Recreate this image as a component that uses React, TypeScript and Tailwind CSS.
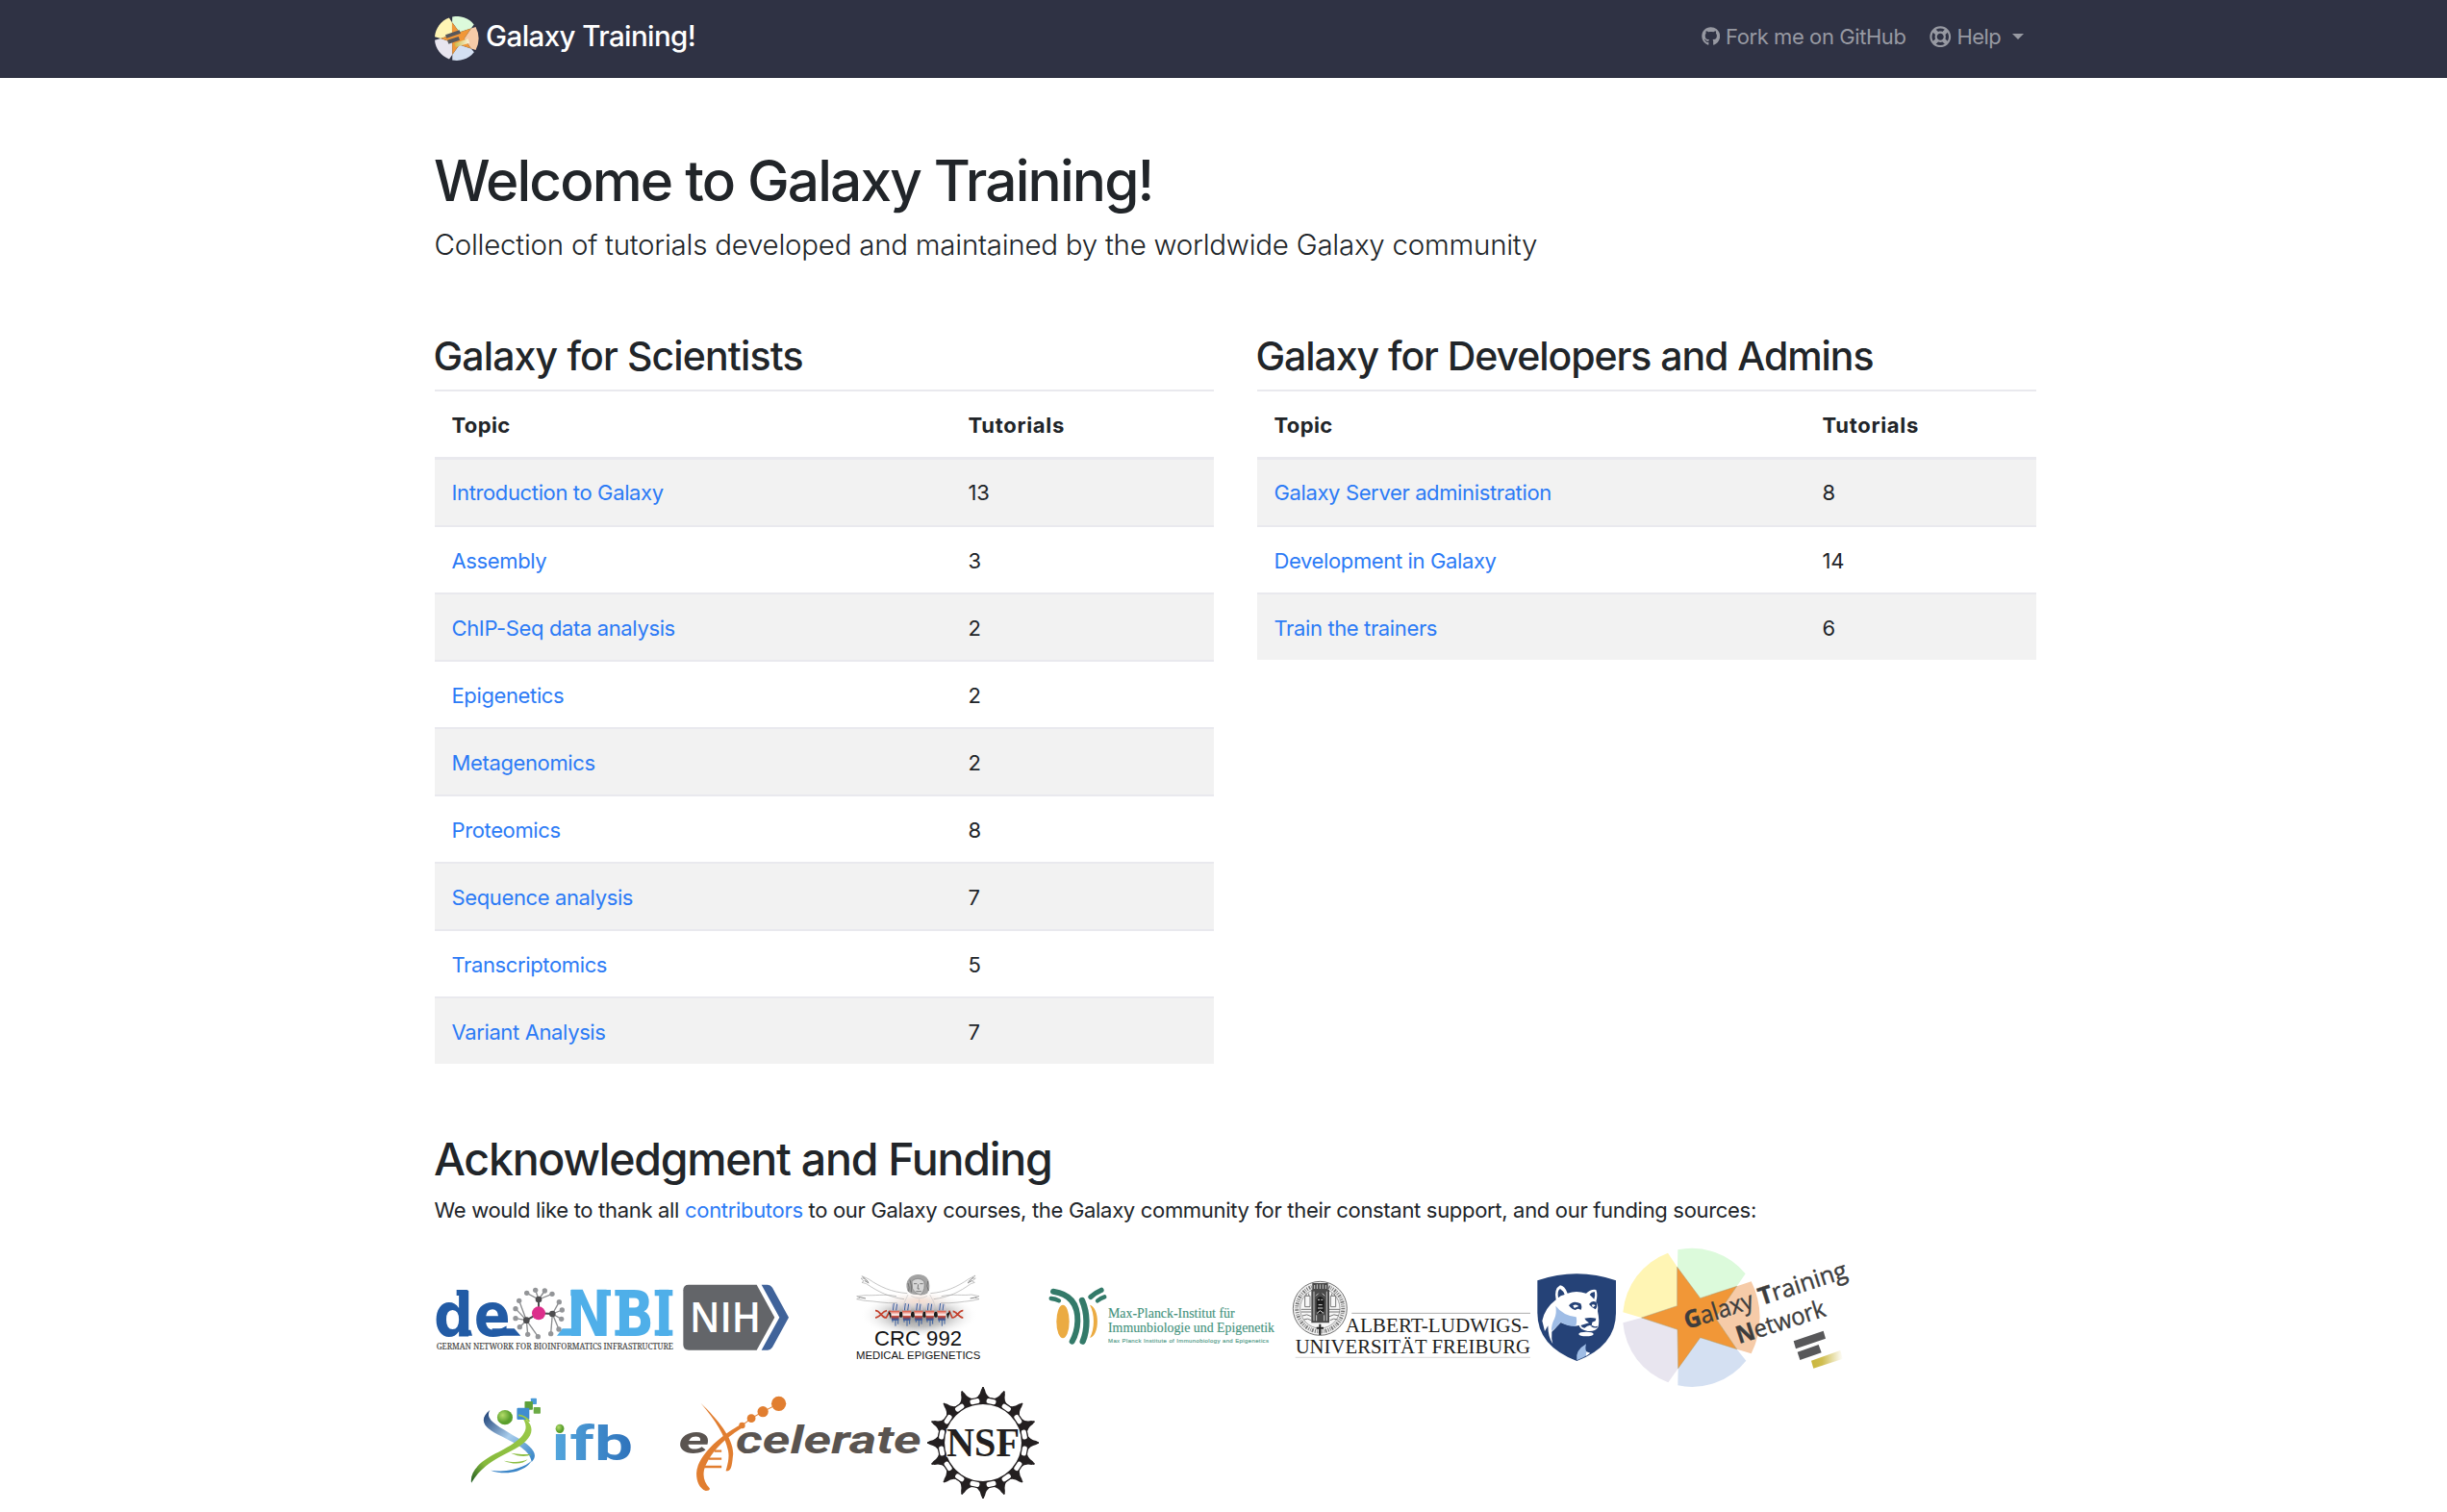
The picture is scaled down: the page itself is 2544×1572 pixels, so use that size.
import React from "react";
import { FaGithub, FaRegLifeRing } from "react-icons/fa";

type Topic = { name: string; count: number };

const scientistTopics: Topic[] = [
  { name: "Introduction to Galaxy", count: 13 },
  { name: "Assembly", count: 3 },
  { name: "ChIP-Seq data analysis", count: 2 },
  { name: "Epigenetics", count: 2 },
  { name: "Metagenomics", count: 2 },
  { name: "Proteomics", count: 8 },
  { name: "Sequence analysis", count: 7 },
  { name: "Transcriptomics", count: 5 },
  { name: "Variant Analysis", count: 7 },
];

const developerTopics: Topic[] = [
  { name: "Galaxy Server administration", count: 8 },
  { name: "Development in Galaxy", count: 14 },
  { name: "Train the trainers", count: 6 },
];

/* The five-wedge wheel with the orange star. */
function StarWheel() {
  return (
    <>
      <path d="M223 28A216 216 0 0 1 434 103L407 142L293 179L222 82Z" fill="#dcfadb" />
      <path d="M192 38A216 216 0 0 0 52 223L110 240L221 203V82Z" fill="#fff5b4" />
      <path d="M52 256A216 216 0 0 0 193 442L224 398L222 277L110 240Z" fill="#e8e5ef" />
      <path d="M223 451A216 216 0 0 0 436 374L407 338L293 302L224 398Z" fill="#d4e0f2" />
      <path d="M452 127A250 250 0 0 1 452 352L407 338L340 240L407 142Z" fill="#f6cba8" />
      <path
        d="M221 82L293 179L407 142L340 240L407 338L293 302L224 398L222 277L110 240L221 203Z"
        fill="#f19737"
        stroke="#a59a72"
        strokeWidth="1.5"
      />
    </>
  );
}

function BrandMark() {
  return (
    <svg className="h-[46px] w-[46px]" viewBox="52 24 432 432">
      <defs>
        <linearGradient id="brandGold" x1="0" x2="1">
          <stop offset="0" stopColor="#cdb844" />
          <stop offset="1" stopColor="#fbf6dc" />
        </linearGradient>
      </defs>
      <StarWheel />
      <path d="M155 205L293 158L305 190L168 237Z" fill="#58585a" />
      <path d="M174 256L284 221L296 256L187 293Z" fill="#58585a" />
      <path d="M243 287L378 243L390 284L256 325Z" fill="url(#brandGold)" />
    </svg>
  );
}

function DeNbiLogo() {
  const clusters = [
    { hub: [360, 93], leaves: [[323, 73], [350, 64], [379, 66], [402, 76]] },
    { hub: [403, 138], leaves: [[424, 101], [433, 126], [431, 154], [423, 186], [398, 200]] },
    { hub: [322, 158], leaves: [[299, 97], [288, 122], [288, 152], [301, 179], [326, 202], [358, 209]] },
  ];
  return (
    <svg className="h-[152px] w-[250px] shrink-0 overflow-visible" viewBox="36 -90 750 456">
      <g fontFamily="DejaVu Sans" fontWeight="bold">
        <text x="33" y="206" fontSize="186" fill="#225ba5" textLength="123" lengthAdjust="spacingAndGlyphs">d</text>
        <text x="158" y="206" fontSize="186" fill="#225ba5" textLength="114" lengthAdjust="spacingAndGlyphs">e</text>
        <text x="446" y="206" fontSize="197" fill="#4fafe9" textLength="141" lengthAdjust="spacingAndGlyphs">N</text>
        <text x="597" y="206" fontSize="197" fill="#4fafe9" textLength="123" lengthAdjust="spacingAndGlyphs">B</text>
        <text x="721" y="206" fontSize="197" fill="#4fafe9" textLength="60" lengthAdjust="spacingAndGlyphs">I</text>
      </g>
      <path d="M104 63H136Q141 63 141 70V81H104ZM125 188H148L153 206H125ZM215 184H284L304 206H215Z" fill="#225ba5" />
      <path d="M434 184H484V206H417ZM460 63H490V82H460ZM550 63H585V82H572ZM598 63H640V82H598ZM598 188H640V206H598ZM722 63H778V82H722ZM722 188H778V206H722Z" fill="#4fafe9" />
      {clusters.map(({ hub, leaves }) => (
        <g key={hub[0]}>
          {leaves.map(([x, y]) => (
            <g key={`${x}-${y}`}>
              <line x1={hub[0]} y1={hub[1]} x2={x} y2={y} stroke="#8a8c8e" strokeWidth="4" />
              <circle cx={x} cy={y} r="8" fill="#939598" />
            </g>
          ))}
          <line x1="360" y1="136" x2={hub[0]} y2={hub[1]} stroke="#4d4d4f" strokeWidth="6" />
          <circle cx={hub[0]} cy={hub[1]} r="10" fill="#4d4d4f" />
        </g>
      ))}
      <circle cx="360" cy="136" r="21" fill="#dc2f8b" />
      <text x="41" y="249" fontSize="25" fontFamily="Noto Serif, Liberation Serif" fill="#3f3f41" stroke="#3f3f41" strokeWidth="0.4" textLength="739" lengthAdjust="spacingAndGlyphs">
        GERMAN NETWORK FOR BIOINFORMATICS INFRASTRUCTURE
      </text>
    </svg>
  );
}

function NihLogo() {
  return (
    <svg className="h-[152px] w-[114px] shrink-0" viewBox="804 -90 342 456">
      <path d="M828 47H1040L1096 149L1040 251H828Q811 251 811 234V64Q811 47 828 47Z" fill="#636569" />
      <path d="M1055 47H1074Q1083 47 1089 56L1140 149L1089 242Q1083 251 1074 251H1055L1111 149Z" fill="#40639a" />
      <text x="831" y="195" fontSize="128" fontFamily="Open Sans" fontWeight="600" fill="#fff" textLength="222" lengthAdjust="spacingAndGlyphs">
        NIH
      </text>
    </svg>
  );
}

function CrcLogo() {
  return (
    <svg className="h-[152px] w-[134px] shrink-0 overflow-visible" viewBox="84 -60 402 456">
      <defs>
        <radialGradient id="crcShade">
          <stop offset="0" stopColor="#777" stopOpacity="0.95" />
          <stop offset="0.5" stopColor="#999" stopOpacity="0.6" />
          <stop offset="1" stopColor="#fff" stopOpacity="0" />
        </radialGradient>
        <radialGradient id="crcSkin">
          <stop offset="0" stopColor="#f6dccf" />
          <stop offset="1" stopColor="#fff" stopOpacity="0" />
        </radialGradient>
        <linearGradient id="crcCoil" x1="0" y1="0" x2="0" y2="1">
          <stop offset="0" stopColor="#d8452f" />
          <stop offset="0.45" stopColor="#fff" />
          <stop offset="0.6" stopColor="#c3402e" />
          <stop offset="1" stopColor="#24549c" />
        </linearGradient>
      </defs>
      <ellipse cx="287" cy="172" rx="185" ry="72" fill="url(#crcShade)" />
      <ellipse cx="287" cy="128" rx="125" ry="34" fill="url(#crcSkin)" />
      <g fill="none" stroke="#a0a0a0" strokeWidth="1.8">
        <path d="M250 104C200 100 165 84 130 60M240 122C195 116 160 100 122 74M130 60L108 50L116 58L105 57L114 66L108 70L122 74" />
        <path d="M322 104C370 100 405 84 440 60M332 122C380 116 412 100 448 74M440 60L462 48L454 58L463 57L452 66L460 70L448 74" />
        <path d="M216 113C180 105 145 112 120 110M218 134C180 136 150 128 118 127M120 110L92 113L102 118L92 122L118 127" />
        <path d="M356 113C390 105 425 112 450 108M354 134C390 136 420 130 450 127M450 108L474 113L462 118L474 122L450 127" />
        <path d="M252 108Q240 130 236 150M320 108Q334 130 338 150M262 112Q287 126 312 112M287 122V140" stroke="#c4c4c4" />
        <path d="M112 54L128 68M116 64L130 72M456 54L440 68M452 64L438 72M100 116L120 120M466 116L446 120" stroke="#888" strokeWidth="3" />
      </g>
      <path d="M250 96Q242 72 256 56Q272 42 292 46Q314 50 318 72Q322 92 312 104Q300 112 282 108Q262 110 250 96Z" fill="#a3a3a3" />
      <path d="M264 66Q282 50 302 66Q308 90 292 108Q276 108 266 90Z" fill="#d6d6d6" stroke="#777" strokeWidth="2" />
      <path d="M270 74H280M289 74H299M284 76L282 90H288M277 98H294M252 72Q258 86 254 98M258 62Q264 76 262 100M314 66Q308 82 316 96" fill="none" stroke="#666" strokeWidth="2.5" />
      <path d="M150 158C165 156 168 180 184 180L196 158M150 180C165 180 170 160 186 158M424 158C410 156 406 180 390 180L380 158M424 180C410 180 405 160 392 160" fill="none" stroke="#c4412d" strokeWidth="5" />
      {[230, 267, 303, 339].map((x) => (
        <ellipse key={x} cx={x} cy="170" rx="6" ry="9" fill="#1a1a1a" />
      ))}
      <path d="M190 160L202 168L198 184ZM384 160L372 168L376 184Z" fill="#1a1a1a" />
      {[212, 248, 285, 320, 357].map((x) => (
        <g key={x}>
          <path d={`M${x - 14} 158H${x + 14}L${x + 11} 188H${x - 11}Z`} fill="url(#crcCoil)" />
          <path d={`M${x - 9} 137V157M${x + 1} 134V157M${x + 10} 139V157`} stroke="#d0c8da" strokeWidth="3" />
          <path d={`M${x - 4} 135L${x - 7} 157M${x + 6} 137L${x + 3} 157M${x - 8} 184V194M${x + 1} 184V206M${x + 9} 183V200`} stroke="#3a5f9f" strokeWidth="3" />
        </g>
      ))}
      <g fontFamily="Liberation Sans" fill="#111">
        <text x="147" y="268" fontSize="65" textLength="273" lengthAdjust="spacingAndGlyphs">CRC 992</text>
        <text x="90" y="310" fontSize="35" textLength="388" lengthAdjust="spacingAndGlyphs">MEDICAL EPIGENETICS</text>
      </g>
    </svg>
  );
}

function MaxPlanckLogo() {
  return (
    <svg className="h-[152px] w-[238px] shrink-0" viewBox="687 -60 714 456">
      <ellipse cx="735" cy="192" rx="20" ry="52" fill="#ebab42" />
      <path d="M819 140C851 148 851 236 819 243C835 215 835 168 819 140Z" fill="#ebab42" />
      <g fill="none" stroke="#337a69" strokeLinecap="round">
        <path d="M705 98C760 106 782 140 781 190C780 220 774 236 764 254" strokeWidth="18" />
        <path d="M698 120Q712 121 723 127" strokeWidth="13" />
        <path d="M795 126C812 165 813 215 797 254" strokeWidth="19" />
        <path d="M822 115Q836 102 855 94" strokeWidth="16" />
        <path d="M843 127Q853 119 865 115" strokeWidth="13" />
      </g>
      <g fill="#43927c" fontFamily="Liberation Serif" stroke="#43927c" strokeWidth="0.4">
        <text x="876" y="180" fontSize="41" textLength="395" lengthAdjust="spacingAndGlyphs">Max-Planck-Institut für</text>
        <text x="876" y="224" fontSize="41" textLength="519" lengthAdjust="spacingAndGlyphs">Immunbiologie und Epigenetik</text>
      </g>
      <text x="876" y="259" fontSize="18" fontFamily="Liberation Sans" fill="#5aa08d" stroke="#5aa08d" strokeWidth="0.5" textLength="501">
        Max Planck Institute of Immunobiology and Epigenetics
      </text>
    </svg>
  );
}

function FreiburgLogo() {
  return (
    <svg className="h-[152px] w-[249px] shrink-0" viewBox="39 -60 747 456">
      <circle cx="127" cy="151" r="84" fill="#f2f2f2" stroke="#555" strokeWidth="2.5" />
      <circle cx="127" cy="151" r="72" fill="none" stroke="#777" strokeWidth="12" strokeDasharray="3 4 5 3 2 4" />
      <circle cx="127" cy="151" r="62" fill="#f7f7f7" stroke="#777" strokeWidth="2" />
      <path d="M80 112H96V146H80ZM160 112H176V146H160ZM84 104V112M92 104V112M164 104V112M172 104V112M68 154H100M68 162H100M156 154H190M156 162H190M72 174Q86 166 100 176M156 176Q170 166 186 174M76 186Q88 180 100 188M158 188Q170 180 182 186" fill="none" stroke="#777" strokeWidth="3" />
      <path d="M103 72H152V92H156V196H100V92H103Z" fill="#4a4a4a" />
      <path d="M110 78V90M118 76V90M127 76V90M136 76V90M145 78V90M108 98V190M148 98V190M116 190V172M140 190V172M114 112L122 104M142 112L134 104" stroke="#c9c9c9" strokeWidth="3" />
      <path d="M116 124Q127 104 140 124V160Q127 176 116 160Z" fill="#1c1c1c" />
      <path d="M120 124H126M130 124H136M122 140H134M120 150H136M118 166L127 158L138 166" stroke="#ddd" strokeWidth="3" fill="none" />
      <path d="M127 200V234M116 212H138" stroke="#222" strokeWidth="6" />
      <path d="M226 166H783" stroke="#9a9a9a" strokeWidth="2.5" />
      <path d="M50 304H783" stroke="#cfcfcf" strokeWidth="2.5" />
      <g fontFamily="Liberation Serif" fill="#1d1d1b">
        <text x="206" y="226" fontSize="64" textLength="572" lengthAdjust="spacingAndGlyphs">ALBERT-LUDWIGS-</text>
        <text x="50" y="290" fontSize="61" textLength="733" lengthAdjust="spacingAndGlyphs">UNIVERSITÄT FREIBURG</text>
      </g>
    </svg>
  );
}

function PennStateShield() {
  return (
    <svg className="h-[152px] w-[83px] shrink-0" viewBox="804 -60 249 456">
      <path d="M805 64Q928 22 1050 64V165Q1050 268 928 315Q805 268 805 165Z" fill="#254277" />
      <path
        d="M863 124Q856 90 876 79Q890 80 899 104Q926 94 957 104Q972 90 988 93Q994 108 988 130Q996 142 993 160Q1000 192 994 210Q986 224 962 222Q938 218 935 204L915 208Q885 200 878 196L850 224Q848 246 853 262Q838 240 838 205L828 222L820 190Q828 150 863 124Z"
        fill="#fff"
      />
      <path d="M862 143Q884 172 926 178Q930 190 924 208Q892 206 878 194Q862 212 849 222Q848 202 858 184Q866 164 862 143Z" fill="#9fbde6" />
      <path d="M878 196Q900 208 926 207Q936 214 938 222Q930 236 955 262Q925 282 928 313Q868 290 852 252Q848 224 878 196Z" fill="#254277" />
      <path d="M870 118Q866 96 876 90Q886 96 890 108Q876 110 870 118Z" fill="#254277" />
      <path d="M968 108Q974 98 984 100Q986 112 982 122Z" fill="#254277" />
      <path d="M903 142Q916 124 940 136Q946 148 940 156Q932 148 924 156Q912 154 903 142Z" fill="#254277" />
      <path d="M966 138Q976 124 989 132Q994 146 986 154Q976 150 966 138Z" fill="#254277" />
      <path d="M916 142Q926 136 934 144L920 150Z" fill="#fff" />
      <path d="M974 140Q980 136 986 142L978 148Z" fill="#fff" />
      <path d="M952 182Q970 178 988 182L986 190L976 194L974 206Q966 200 952 212Q944 212 940 204L966 196Q956 190 952 182Z" fill="#254277" />
      <path d="M974 206Q984 212 992 208" fill="none" stroke="#254277" strokeWidth="4" />
      <ellipse cx="957" cy="231" rx="23" ry="7" fill="#fff" />
      <path d="M928 313Q922 282 957 262Q953 278 958 286L966 292Q950 306 928 313Z" fill="#9fbde6" />
      <path d="M958 286L970 290L956 300Z" fill="#fff" />
    </svg>
  );
}

function TrainingNetworkLogo() {
  return (
    <svg className="h-[152px] w-[254px] shrink-0 overflow-visible" viewBox="48 0 762 456">
      <defs>
        <linearGradient id="networkGold" x1="0" x2="1">
          <stop offset="0" stopColor="#cab63c" />
          <stop offset="0.35" stopColor="#d0be52" />
          <stop offset="1" stopColor="#fff" />
        </linearGradient>
      </defs>
      <StarWheel />
      <g fontFamily="Open Sans" fill="#3d3d3d" stroke="#3d3d3d" strokeWidth="1.2">
        <g transform="translate(258 274) rotate(-17.8)">
          <text x="-6" y="0" fontSize="76" textLength="222" lengthAdjust="spacingAndGlyphs">
            <tspan fontWeight="bold">G</tspan>alaxy
          </text>
          <text x="237" y="0" fontSize="76" textLength="286" lengthAdjust="spacingAndGlyphs">
            <tspan fontWeight="bold">T</tspan>raining
          </text>
        </g>
        <text transform="translate(414 322) rotate(-17.8)" fontSize="76" textLength="288" lengthAdjust="spacingAndGlyphs">
          <tspan fontWeight="bold">N</tspan>etwork
        </text>
      </g>
      <path d="M584 313L677 281L684 305L591 337Z" fill="#58585a" />
      <path d="M596 347L662 324L671 349L604 372Z" fill="#58585a" />
      <path d="M639 374L730 342L738 368L646 398Z" fill="url(#networkGold)" />
    </svg>
  );
}

function IfbLogo() {
  return (
    <svg className="h-[130px] w-[170px] shrink-0 overflow-visible" viewBox="45 6 423 390" preserveAspectRatio="none">
      <defs>
        <linearGradient id="ifbBlue" x1="0" y1="0" x2="1" y2="1">
          <stop offset="0" stopColor="#15386f" />
          <stop offset="0.5" stopColor="#a9cdec" />
          <stop offset="1" stopColor="#2e7fc4" />
        </linearGradient>
        <linearGradient id="ifbGreen" x1="1" y1="0" x2="0" y2="1">
          <stop offset="0" stopColor="#9ccb4a" />
          <stop offset="0.75" stopColor="#86b93b" />
          <stop offset="1" stopColor="#1f5a22" />
        </linearGradient>
        <linearGradient id="ifbText" x1="0" y1="0" x2="1" y2="0">
          <stop offset="0" stopColor="#55a8de" />
          <stop offset="1" stopColor="#2e72bb" />
        </linearGradient>
        <radialGradient id="ifbBall" cx="0.35" cy="0.35">
          <stop offset="0" stopColor="#b4dc6a" />
          <stop offset="1" stopColor="#5a9f2d" />
        </radialGradient>
      </defs>
      <path d="M98 78C84 108 116 126 160 158C208 190 226 216 206 240C202 204 166 184 128 160C74 130 72 104 98 78Z" fill="url(#ifbBlue)" />
      <path d="M176 94C228 130 206 174 152 206C98 238 72 262 50 305C46 272 68 242 112 214C174 176 214 142 176 94Z" fill="url(#ifbGreen)" />
      <path d="M206 236C190 270 140 284 100 266C140 274 180 262 206 236Z" fill="#3c86c8" />
      <path d="M196 232C184 248 156 248 134 236C160 242 176 242 196 232Z" fill="#8dbf45" />
      <path d="M206 216C190 226 170 222 152 212C172 216 190 216 206 216Z" fill="#8dbf45" />
      <ellipse cx="137" cy="101" rx="20" ry="23" fill="url(#ifbBall)" />
      <rect x="204" y="41" width="15" height="19" rx="2" fill="#4b9bd8" />
      <rect x="188" y="51" width="21" height="26" rx="2" fill="#5da03a" />
      <rect x="211" y="69" width="18" height="20" rx="2" fill="#6cab45" />
      <rect x="168" y="71" width="32" height="37" rx="3" fill="#3f8dd0" />
      <path d="M172 94Q190 96 200 114" fill="none" stroke="#9ccb4a" strokeWidth="5" />
      <text x="257" y="234" fontFamily="Roboto" fontWeight="bold" fontSize="150" fill="url(#ifbText)" textLength="211" lengthAdjust="spacingAndGlyphs">
        ıfb
      </text>
      <ellipse cx="279" cy="136" rx="11" ry="14" fill="url(#ifbBall)" />
    </svg>
  );
}

function ExcelerateLogo() {
  return (
    <svg className="h-[130px] w-[253px] shrink-0 overflow-visible" viewBox="587 6 630 390" preserveAspectRatio="none">
      <g fontFamily="Roboto" fontWeight="bold" fontStyle="italic" fontSize="120" fill="#5a5450">
        <text x="586" y="212" textLength="80" lengthAdjust="spacingAndGlyphs">e</text>
        <text x="734" y="212" textLength="480" lengthAdjust="spacingAndGlyphs">celerate</text>
      </g>
      <g fill="none" stroke="#e17e30">
        <path d="M678 206H697M664 230H697M652 255H697" strokeWidth="7" />
        <path d="M750 126L774 104L804 83L845 58" strokeWidth="3" />
      </g>
      <g fill="#e17e30">
        <path d="M643 56C690 110 734 175 726 225C724 250 722 272 708 268C712 250 718 228 714 205C706 158 682 110 643 56Z" />
        <path d="M746 124C690 160 634 222 632 275C632 302 640 322 656 330Q668 330 666 322C650 300 646 278 656 250C676 200 704 168 752 132Z" />
        <ellipse cx="750" cy="126" rx="8" ry="10" />
        <ellipse cx="774" cy="104" rx="11" ry="13" />
        <ellipse cx="804" cy="83" rx="14" ry="17" />
        <ellipse cx="845" cy="58" rx="19" ry="23" />
      </g>
    </svg>
  );
}

function NsfLogo() {
  const steps = Array.from({ length: 16 }, (_, i) => i * 22.5);
  return (
    <svg className="h-[130px] w-[118px] shrink-0" viewBox="-59 -58 118 130">
      <g fill="#231f20">
        <circle r="43.7" fill="none" stroke="#231f20" strokeWidth="7.6" />
        {steps.map((a) => (
          <path key={a} transform={`rotate(${a})`} d="M-8.5 -46Q-3.2 -48.5 -1.9 -55.2Q-1 -56.4 -.8 -58H.8Q1 -56.4 1.9 -55.2Q3.2 -48.5 8.5 -46V-41H-8.5Z" />
        ))}
      </g>
      {steps.map((a) => (
        <rect key={a} transform={`rotate(${a + 11.25})`} x="-5" y="-46.2" width="10" height="5" rx="2" fill="#fff" />
      ))}
      <text x="-38" y="13.5" fontFamily="Liberation Serif" fontWeight="bold" fontSize="42.5" fill="#231f20" stroke="#fff" strokeWidth="1.5" paintOrder="stroke" textLength="76" lengthAdjust="spacingAndGlyphs">
        NSF
      </text>
    </svg>
  );
}

function TopicTable({ title, topics, columns, titleClass }: { title: string; topics: Topic[]; columns: string; titleClass: string }) {
  return (
    <section className="w-[810px]">
      <h2 className={`mb-[10px] text-[41px] leading-[50px] font-medium whitespace-nowrap ${titleClass}`}>{title}</h2>
      <div className={`grid h-[70px] items-center border-t-2 border-[#e9e9ee] pt-[2px] pl-[17.5px] font-bold ${columns}`}>
        <span className="tracking-[0.35px]">Topic</span>
        <span className="tracking-[0.7px]">Tutorials</span>
      </div>
      {topics.map((topic, i) => (
        <div
          key={topic.name}
          className={`grid items-center border-[#e9e9ee] pl-[17.5px] ${i === 0 ? "h-[71px] border-t-[3px]" : "h-[70px] border-t-2 pt-px"} ${i % 2 === 0 ? "bg-[#f2f2f2]" : "bg-white"} ${columns}`}
        >
          <a className="tracking-[-0.37px] text-[#2c7bf6]">{topic.name}</a>
          <span className="tracking-[-0.1px]">{topic.count}</span>
        </div>
      ))}
    </section>
  );
}

export default function App() {
  return (
    <div className="h-[1572px] w-[2544px] overflow-hidden bg-white font-['Inter',sans-serif] text-[22px] leading-[34px] text-[#212529]">
      <nav className="h-[81px] border-b border-[#242738] bg-[#2f3244]">
        <div className="ml-[452px] flex h-[80px] w-[1665px] items-center justify-between">
          <a className="flex items-center gap-[7px] text-white">
            <BrandMark />
            <span className="-mt-[6px] text-[29.5px] leading-[44px] font-medium tracking-[-0.58px] whitespace-nowrap">Galaxy Training!</span>
          </a>
          <div className="-mt-[4px] flex items-center pr-[13.5px] text-[#9799a2]">
            <FaGithub className="size-[19.5px]" />
            <span className="ml-[6px] w-[187px] tracking-[-0.42px] whitespace-nowrap">Fork me on GitHub</span>
            <FaRegLifeRing className="ml-[25px] size-[22.5px]" />
            <span className="ml-[6px] w-[46px] tracking-[-0.6px]">Help</span>
            <span className="ml-[11px] border-x-[6px] border-t-[6px] border-x-transparent border-t-[#9799a2]" />
          </div>
        </div>
      </nav>

      <main className="ml-[452px] w-[1665px]">
        <header className="pt-[72px]">
          <h1 className="-ml-px text-[58.5px] leading-[70px] font-medium tracking-[-1.84px] whitespace-nowrap">Welcome to Galaxy Training!</h1>
          <p className="mt-[9px] -ml-[0.5px] text-[29.5px] leading-[44px] font-light tracking-[-0.25px] whitespace-nowrap">
            Collection of tutorials developed and maintained by the worldwide Galaxy community
          </p>
        </header>

        <div className="mt-[69px] flex items-start justify-between">
          <TopicTable title="Galaxy for Scientists" topics={scientistTopics} columns="grid-cols-[537px_1fr]" titleClass="-ml-[1.5px] tracking-[-0.86px]" />
          <TopicTable title="Galaxy for Developers and Admins" topics={developerTopics} columns="grid-cols-[570px_1fr]" titleClass="-ml-[1.5px] tracking-[-1.06px]" />
        </div>

        <section className="mt-[71px]">
          <h2 className="-ml-px text-[46.5px] leading-[56px] font-medium tracking-[-1.26px] whitespace-nowrap">Acknowledgment and Funding</h2>
          <p className="mt-[8px] -ml-[0.5px] tracking-[-0.315px] whitespace-nowrap">
            We would like to thank all <a className="text-[#2c7bf6]">contributors</a> to our Galaxy courses, the Galaxy community for their constant support, and our funding sources:
          </p>
          <div className="mt-[15px] flex">
            <DeNbiLogo />
            <div className="ml-[6px] flex"><NihLogo /></div>
            <div className="ml-[66px] flex"><CrcLogo /></div>
            <div className="ml-[67px] flex"><MaxPlanckLogo /></div>
            <div className="ml-[16px] flex"><FreiburgLogo /></div>
            <div className="ml-[6px] flex"><PennStateShield /></div>
            <div className="ml-[5px] flex"><TrainingNetworkLogo /></div>
          </div>
          <div className="ml-[36px] flex">
            <IfbLogo />
            <div className="ml-[48px] flex"><ExcelerateLogo /></div>
            <div className="ml-[4px] flex"><NsfLogo /></div>
          </div>
        </section>
      </main>
    </div>
  );
}
